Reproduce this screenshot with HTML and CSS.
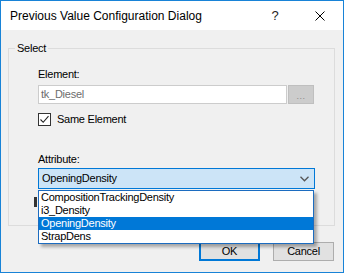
FILE: index.html
```html
<!DOCTYPE html>
<html>
<head>
<meta charset="utf-8">
<link rel="stylesheet" href="styles.css">
</head>
<body>
<div class="window">
  <div class="titlebar">
    <span class="title">Previous Value Configuration Dialog</span>
    <span class="help">?</span>
    <span class="close"><svg width="10" height="10" viewBox="0 0 10 10"><path d="M0.5 0.5 L9.5 9.5 M9.5 0.5 L0.5 9.5" stroke="#000" stroke-width="1" fill="none"/></svg></span>
  </div>
  <div class="content">
    <div class="group">
      <span class="legend">Select</span>
      <div class="label">Element:</div>
      <div class="row">
        <div class="textbox">tk_Diesel</div>
        <div class="browse">...</div>
      </div>
      <div class="checkrow">
        <span class="checkbox"><svg width="11" height="11" viewBox="0 0 11 11"><path d="M1.5 5.5 L4.2 8.3 L9.5 2.2" stroke="#222" stroke-width="1.1" fill="none"/></svg></span>
        <span class="checklabel">Same Element</span>
      </div>
      <div class="label label-attr">Attribute:</div>
      <div class="combo">
        <span class="combo-text">OpeningDensity</span>
        <svg class="chev" width="9" height="6" viewBox="0 0 9 6"><path d="M0.5 0.8 L4.5 4.8 L8.5 0.8" stroke="#555" stroke-width="1.3" fill="none"/></svg>
      </div>
    </div>
    <div class="buttons">
      <div class="btn btn-default">OK</div>
      <div class="btn">Cancel</div>
    </div>
  </div>
  <span class="peek"></span>
  <div class="dropdown">
    <div class="item">CompositionTrackingDensity</div>
    <div class="item">i3_Density</div>
    <div class="item selected">OpeningDensity</div>
    <div class="item">StrapDens</div>
  </div>
</div>
</body>
</html>
```

FILE: styles.css
```css
html, body {
  margin: 0;
  padding: 0;
  background: #ffffff;
}

body {
  font-family: "Liberation Sans", Arial, sans-serif;
  color: #000;
}

.window {
  position: relative;
  width: 344px;
  height: 273px;
  box-sizing: border-box;
  border: 1px solid #1883d7;
  background: #f0f0f0;
  display: flex;
  flex-direction: column;
}

.titlebar {
  height: 29px;
  background: #ffffff;
  display: flex;
  align-items: center;
  flex: none;
}

.title {
  flex: 1;
  padding-left: 9px;
  font-size: 12px;
  color: #000;
  white-space: nowrap;
}

.help {
  width: 44px;
  text-align: center;
  font-size: 13px;
  color: #222;
}

.close {
  width: 46px;
  height: 29px;
  display: flex;
  align-items: center;
  justify-content: center;
}

.content {
  flex: 1;
  padding: 18px 0 0 7px;
  display: flex;
  flex-direction: column;
}

.group {
  position: relative;
  width: 327px;
  height: 178px;
  box-sizing: border-box;
  border: 1px solid #dcdcdc;
  padding: 19px 0 0 29px;
  font-size: 11px;
  letter-spacing: -0.25px;
}

.legend {
  position: absolute;
  left: 6px;
  top: -7px;
  padding: 0 2px;
  background: #f0f0f0;
  line-height: 13px;
}

.label {
  line-height: 13px;
  height: 13px;
}

.row {
  margin-top: 4px;
  display: flex;
  gap: 1px;
}

.textbox {
  width: 249px;
  height: 19px;
  box-sizing: border-box;
  border: 1px solid #cccccc;
  background: #ffffff;
  color: #6d6d6d;
  line-height: 17px;
  padding-left: 2px;
}

.browse {
  width: 26px;
  height: 19px;
  box-sizing: border-box;
  border: 1px solid #bfbfbf;
  background: #cccccc;
  color: #8a8a8a;
  text-align: center;
  line-height: 20px;
  font-size: 9px;
  letter-spacing: 0.5px;
}

.checkrow {
  margin-top: 9px;
  display: flex;
  align-items: center;
  gap: 6px;
  height: 13px;
}

.checkbox {
  width: 13px;
  height: 13px;
  box-sizing: border-box;
  border: 1px solid #333333;
  background: #ffffff;
  display: flex;
  align-items: center;
  justify-content: center;
}

.checklabel {
  line-height: 13px;
}

.label-attr {
  margin-top: 27px;
}

.combo {
  margin-top: 2px;
  width: 277px;
  height: 21px;
  box-sizing: border-box;
  border: 1px solid #0078d7;
  background: #cce4f7;
  display: flex;
  align-items: center;
  padding: 0 5px 0 3px;
}

.combo-text {
  flex: 1;
  line-height: 13px;
}

.chev {
  display: block;
}

.buttons {
  margin-top: 16px;
  display: flex;
  justify-content: flex-end;
  gap: 13px;
  padding-right: 9px;
}

.btn {
  width: 61px;
  height: 19px;
  box-sizing: border-box;
  border: 1px solid #adadad;
  background: #e1e1e1;
  font-size: 11px;
  letter-spacing: -0.25px;
  text-align: center;
  line-height: 17px;
}

.btn-default {
  border: 2px solid #0078d7;
  line-height: 15px;
}

.peek {
  position: absolute;
  left: 33px;
  top: 196px;
  width: 3px;
  height: 10px;
  background: #333333;
}

.dropdown {
  position: absolute;
  left: 37px;
  top: 189px;
  width: 276px;
  height: 54px;
  box-sizing: border-box;
  border: 1px solid #1c6cc0;
  background: #ffffff;
  box-shadow: 3px 3px 3px rgba(0, 0, 0, 0.3);
  font-size: 11px;
  letter-spacing: -0.25px;
}

.item {
  height: 13px;
  line-height: 13px;
  padding-left: 2px;
  white-space: nowrap;
}

.item.selected {
  background: #0078d7;
  color: #ffffff;
}
```
